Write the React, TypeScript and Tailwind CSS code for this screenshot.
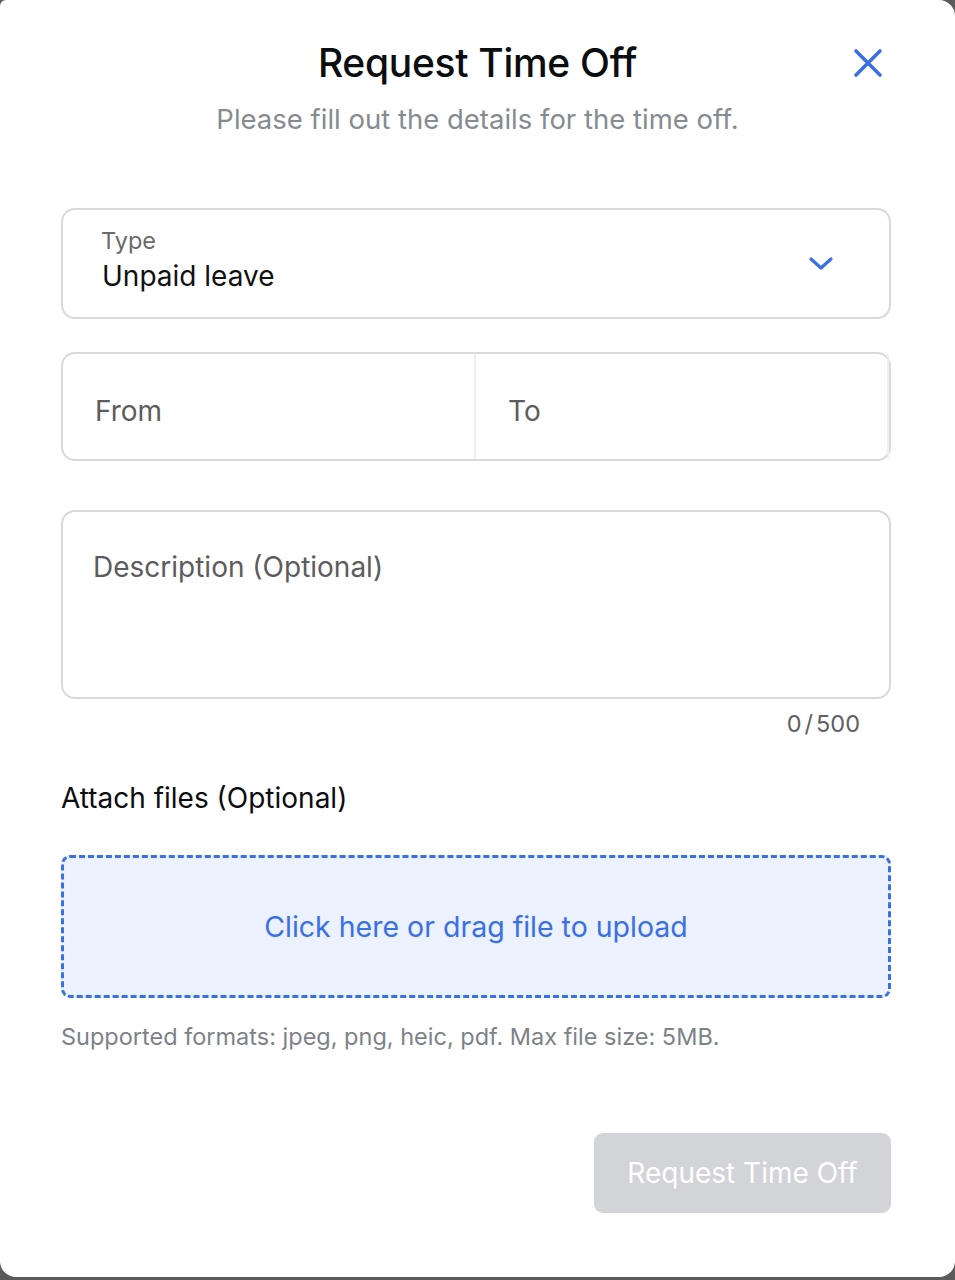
import { useState } from "react";

function CloseIcon() {
  return (
    <svg width="30" height="30" viewBox="0 0 30 30" fill="none">
      <path
        d="M3 3L27 27M27 3L3 27"
        stroke="#3b6fe6"
        strokeWidth="3.6"
        strokeLinecap="round"
      />
    </svg>
  );
}

function ChevronDown() {
  return (
    <svg width="26" height="16" viewBox="0 0 26 16" fill="none">
      <path
        d="M3 3L13 12L23 3"
        stroke="#3b6fe6"
        strokeWidth="3.2"
        strokeLinecap="round"
        strokeLinejoin="round"
      />
    </svg>
  );
}

export default function App() {
  const [description] = useState("");

  return (
    <div
      className="min-h-[1280px] w-full bg-[#5b5b5b]"
      style={{ fontFamily: "Inter, 'Noto Sans', sans-serif" }}
    >
      <div className="flex h-[1277px] w-full flex-col rounded-tl-[6px] rounded-tr-[16px] rounded-b-[16px] bg-white">
        {/* header */}
        <div className="relative flex flex-col items-center pt-[38px]">
          <h2 className="text-[39px] leading-[50px] font-medium tracking-[-0.3px] text-[#0b0d10]">
            Request Time Off
          </h2>
          <p className="mt-[14px] text-[27.5px] leading-[34px] text-[#868b91]">
            Please fill out the details for the time off.
          </p>
          <button className="absolute right-[72px] top-[48px]">
            <CloseIcon />
          </button>
        </div>

        <div className="flex flex-col pl-[61px] pr-[64px] pt-[72px]">
          {/* type select */}
          <div className="flex h-[111px] items-center justify-between rounded-[14px] border-2 border-[#d9d9d9] pb-[7px] pl-[38px] pr-[55px]">
            <div className="flex flex-col">
              <span className="text-[23.5px] leading-[28px] text-[#6a6a6a]">
                Type
              </span>
              <span className="mt-[4px] pl-[1px] text-[28px] leading-[34px] text-[#111]">
                Unpaid leave
              </span>
            </div>
            <span className="pt-[7px]">
              <ChevronDown />
            </span>
          </div>

          {/* dates */}
          <div className="mt-[33px] flex h-[109px] rounded-[14px] border-2 border-[#d9d9d9]">
            <div className="flex flex-1 items-center border-r-2 border-[#efefef] pl-[32px] pt-[8px] text-[28px] text-[#5c5c5c]">
              From
            </div>
            <div className="flex flex-1 items-center border-r-2 border-[#efefef] pl-[32px] pt-[8px] text-[28px] text-[#5c5c5c]">
              To
            </div>
          </div>

          {/* description */}
          <div className="mt-[49px] h-[189px] rounded-[14px] border-2 border-[#d9d9d9] px-[30px] pt-[38px]">
            <span className="text-[28px] leading-[34px] text-[#5c5c5c]">
              Description (Optional)
            </span>
          </div>
          <div className="mt-[10px] pr-[31px] text-right text-[23.5px] leading-[30px] text-[#606060]">
            {description.length}
            <span className="mx-[3px]">/</span>
            500
          </div>

          {/* attach */}
          <p className="mt-[42px] text-[28px] leading-[34px] text-[#0b0d10]">
            Attach files (Optional)
          </p>
          <div className="mt-[40px] flex h-[143px] items-center justify-center rounded-[9px] border-[3px] border-dashed border-[#3b6fe6] bg-[#ebf1fd]">
            <span className="text-[28.5px] leading-[34px] text-[#3b6fe6]">
              Click here or drag file to upload
            </span>
          </div>
          <p className="mt-[24px] text-[23.5px] leading-[30px] text-[#7d8288]">
            Supported formats: jpeg, png, heic, pdf. Max file size: 5MB.
          </p>

          <div className="mt-[81px] flex justify-end">
            <button
              disabled
              className="h-[80px] w-[297px] rounded-[9px] bg-[#d3d4d7] text-[28px] text-white"
            >
              Request Time Off
            </button>
          </div>
        </div>
      </div>
    </div>
  );
}
